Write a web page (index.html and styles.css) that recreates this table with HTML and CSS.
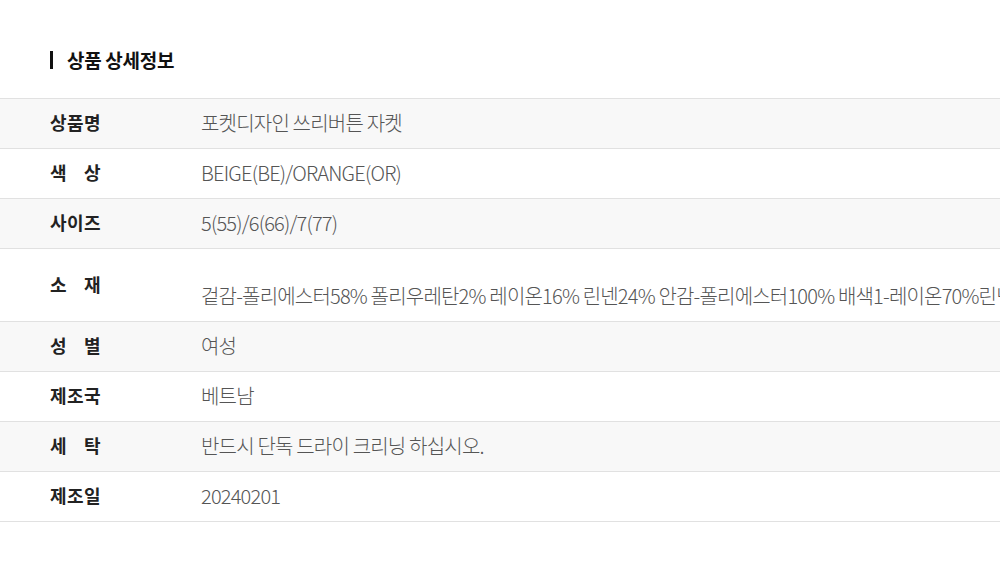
FILE: index.html
```html
<!DOCTYPE html>
<html>
    <head>
        <title>상품 상세정보</title>
        <link rel="stylesheet" href="styles.css">
    </head>
    <body>
        <h2 class="info-title">상품 상세정보</h2>
        <div class="info-wrap">
            <table class="info-table">
                <tr>
                    <th><span class="label">상품명</span></th>
                    <td>포켓디자인 쓰리버튼 자켓</td>
                </tr>
                <tr>
                    <th><span class="label">색 상</span></th>
                    <td>BEIGE(BE)/ORANGE(OR)</td>
                </tr>
                <tr>
                    <th><span class="label">사이즈</span></th>
                    <td>5(55)/6(66)/7(77)</td>
                </tr>
                <tr>
                    <th><span class="label">소 재</span></th>
                    <td><br>겉감-폴리에스터58% 폴리우레탄2% 레이온16% 린넨24% 안감-폴리에스터100% 배색1-레이온70%린넨30%</td>
                </tr>
                <tr>
                    <th><span class="label">성 별</span></th>
                    <td>여성</td>
                </tr>
                <tr>
                    <th><span class="label">제조국</span></th>
                    <td>베트남</td>
                </tr>
                <tr>
                    <th><span class="label">세 탁</span></th>
                    <td>반드시 단독 드라이 크리닝 하십시오.</td>
                </tr>
                <tr>
                    <th><span class="label">제조일</span></th>
                    <td>20240201</td>
                </tr>
            </table>
        </div>
    </body>
</html>
```

FILE: styles.css
```css
body {
    margin: 0;
    background: #fff;
    font-family: "Noto Sans CJK KR", "Noto Sans", sans-serif;
    overflow: hidden;
}
.info-title {
    margin: 51px 0 29px 50px;
    padding-left: 14px;
    border-left: 3px solid #111;
    font-size: 19px;
    line-height: 18px;
    height: 18px;
    font-weight: 700;
    color: #111;
    letter-spacing: -0.3px;
}
.info-wrap {
    width: 100%;
    overflow: hidden;
}
.info-table {
    border-collapse: collapse;
    min-width: 100%;
}
.info-table tr:nth-child(odd) {
    background: #f8f8f8;
}
.info-table th,
.info-table td {
    border-top: 1px solid #e1e1e1;
    border-bottom: 1px solid #e1e1e1;
    padding: 12px 0 14px;
    line-height: 23px;
    text-align: left;
    vertical-align: middle;
}
.info-table th {
    padding-left: 50px;
    padding-right: 100px;
    font-size: 18px;
    font-weight: 700;
    color: #222;
    white-space: nowrap;
}
.info-table td {
    width: 100%;
    white-space: nowrap;
    font-size: 20px;
    color: #555;
    letter-spacing: -0.8px;
    font-weight: 300;
}
.label {
    display: inline-block;
    width: 51px;
    letter-spacing: 0.4px;
    text-align: justify;
    text-align-last: justify;
}
```
